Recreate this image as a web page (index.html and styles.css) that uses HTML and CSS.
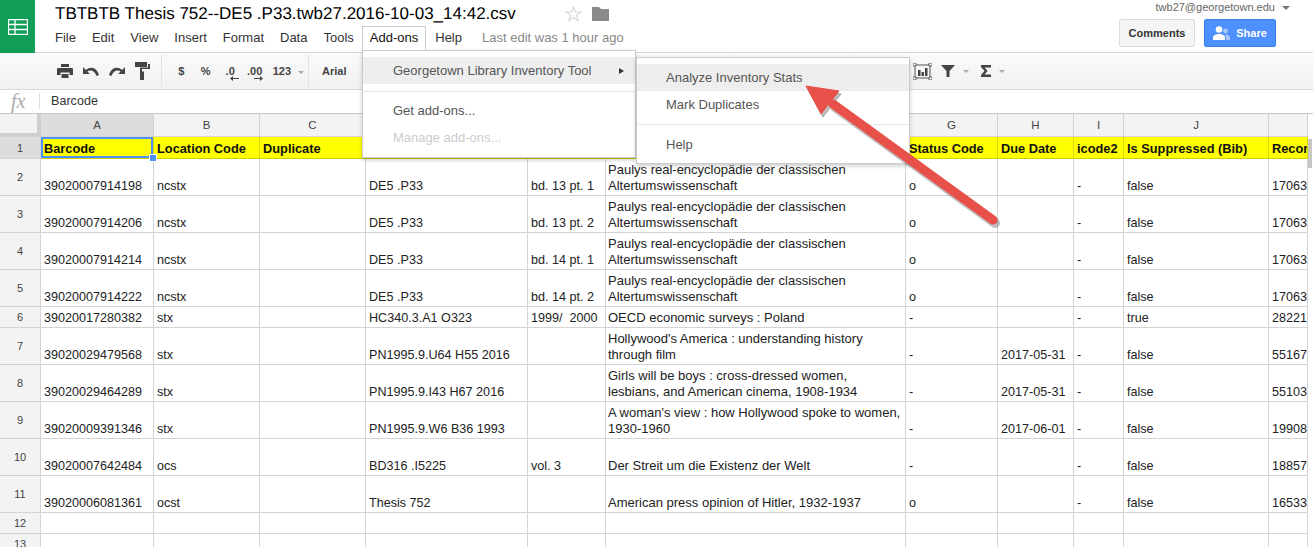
FILE: index.html
```html
<!doctype html>
<html lang="en">
	<head>
		<title>TBTBTB Thesis 752--DE5 .P33.twb27.2016-10-03_14:42.csv</title>
		<meta charset="utf-8">
		<link rel="stylesheet" href="styles.css">
	</head>

	<body>
		<div id="app">
			<div class="header">
				<div class="logo">
					<svg width="20" height="16" viewBox="0 0 20 16"><path d="M.5.5h19v15H.5zM.5 5.500h19M.5 10.500h19M7 .5v15" fill="none" stroke="#fff" stroke-width="1.300"/></svg>
				</div>
				<div class="doc">
					<div class="doc-title">
						<span class="title-text">TBTBTB Thesis 752--DE5 .P33.twb27.2016-10-03_14:42.csv</span>
						<svg class="star" width="17" height="16" viewBox="0 0 17 16"><path d="M8.500 1l2 5h5.300l-4.300 3.300 1.700 5.400-4.700-3.200-4.700 3.200 1.700-5.400L1.200 6h5.300z" fill="none" stroke="#d8d8d8" stroke-width="1.200"/></svg>
						<svg class="folder" width="17" height="14" viewBox="0 0 17 14"><path d="M0 0h7l2 2h8v12H0z" fill="#8a8a8a"/></svg>
					</div>
					<div class="menubar">
						<span class="menu-item">File</span>
						<span class="menu-item">Edit</span>
						<span class="menu-item">View</span>
						<span class="menu-item">Insert</span>
						<span class="menu-item">Format</span>
						<span class="menu-item">Data</span>
						<span class="menu-item">Tools</span>
						<span class="menu-item open">Add-ons</span>
						<span class="menu-item help">Help</span>
						<span class="last-edit">Last edit was 1 hour ago</span>
					</div>
				</div>
				<div class="account">
					<div class="email">twb27@georgetown.edu <i class="caret dark"></i></div>
					<div class="buttons">
						<span class="btn">Comments</span>
						<span class="btn share">
							<svg width="17" height="14" viewBox="0 0 17 14"><circle cx="6" cy="3.500" r="3.300" fill="#fff"/><path d="M0 14v-2.500c0-2 3-3.500 6-3.500s6 1.500 6 3.500V14z" fill="#fff"/><circle cx="12.500" cy="5" r="2.400" fill="#a9c8fb"/><path d="M13 14v-3c0-1-.5-1.800-1.300-2.500 2.500-.3 5.300.8 5.300 2.800V14z" fill="#a9c8fb"/></svg>
							Share
						</span>
					</div>
				</div>
			</div>

			<div class="toolbar">
				<div class="tool-group first">
					<svg width="16" height="14" viewBox="0 0 16 14"><path d="M4 0h8v3H4zM1 4h14a1 1 0 0 1 1 1v6h-3.500V8.500h-9V11H0V5a1 1 0 0 1 1-1zM4.500 10h7v4h-7z" fill="#444"/></svg>
					<svg width="16" height="9" viewBox="0 0 16 9"><path d="M0 0v7h7L4.300 4.400C7.500 2.300 11.500 3.500 13.600 9L16 8C13.500.5 7.800-1.200 2.900 3z" fill="#444"/></svg>
					<svg width="16" height="9" viewBox="0 0 16 9"><path d="M16 0v7H9l2.700-2.600C8.500 2.300 4.500 3.500 2.400 9L0 8C2.500.5 8.200-1.200 13.100 3z" fill="#444"/></svg>
					<svg width="15" height="18" viewBox="0 0 15 18"><path d="M0 0h12v5H0zM13 2h2v5H7v3H5V5.500h8zM5 9.500h4V18H5z" fill="#444"/></svg>
				</div>
				<div class="tool-group numbers">
					<span class="tool-text">$</span>
					<span class="tool-text">%</span>
					<span class="tool-text small">.0<svg width="9" height="5" viewBox="0 0 9 5"><path d="M9 2H3V0L0 2.500 3 5V3h6z" fill="#444"/></svg></span>
					<span class="tool-text small">.00<svg width="9" height="5" viewBox="0 0 9 5"><path d="M0 2h6V0l3 2.500L6 5V3H0z" fill="#444"/></svg></span>
					<span class="tool-text num">123 <i class="caret"></i></span>
				</div>
				<div class="tool-group font">Arial</div>
				<div class="tool-group hidden-a"></div>
				<div class="tool-group hidden-b"></div>
				<div class="tool-group last">
					<svg width="19" height="17" viewBox="0 0 19 17"><path d="M2 2h15v13H2z" fill="none" stroke="#555"/><path d="M5 7h2.500v6H5zM8.500 9H11v4H8.500zM12 5h2.500v8H12z" fill="#444"/><path d="M0 0h3v3H0zM16 0h3v3h-3zM0 14h3v3H0zM16 14h3v3h-3z" fill="#fff" stroke="#444" stroke-width=".8"/></svg>
					<svg class="filter" width="14" height="12" viewBox="0 0 14 12"><path d="M0 0h14L8.500 6v6h-3V6z" fill="#444"/></svg>
					<i class="caret"></i>
					<svg class="sigma" width="10" height="12" viewBox="0 0 10 12"><path d="M0 0h10v2.500H3.700L6.500 6 3.700 9.500H10V12H0V10l3.500-4L0 2z" fill="#444"/></svg>
					<i class="caret"></i>
				</div>
			</div>

			<div class="formula">
				<span class="fx">fx</span>
				<span class="formula-text">Barcode</span>
			</div>

			<div class="sheet">
				<table class="grid">
					<colgroup>
						<col class="w-head"><col class="w-a"><col class="w-b"><col class="w-c"><col class="w-d"><col class="w-e"><col class="w-f"><col class="w-g"><col class="w-h"><col class="w-i"><col class="w-j"><col class="w-k">
					</colgroup>
					<tr class="col-heads">
						<th class="corner"></th><th class="active">A</th><th>B</th><th>C</th><th>D</th><th>E</th><th>F</th><th>G</th><th>H</th><th>I</th><th>J</th><th></th>
					</tr>
					<tr class="short titles">
						<th class="active">1</th><td class="selected">Barcode<span class="handle"></span></td><td>Location Code</td><td>Duplicate</td><td></td><td></td><td></td><td>Status Code</td><td>Due Date</td><td>icode2</td><td>Is Suppressed (Bib)</td><td>Recor</td>
					</tr>
					<tr>
						<th>2</th><td>39020007914198</td><td>ncstx</td><td></td><td>DE5 .P33</td><td>bd. 13 pt. 1</td><td class="wrap">Paulys real-encyclopädie der classischen Altertumswissenschaft</td><td>o</td><td></td><td>-</td><td>false</td><td>17063</td>
					</tr>
					<tr>
						<th>3</th><td>39020007914206</td><td>ncstx</td><td></td><td>DE5 .P33</td><td>bd. 13 pt. 2</td><td class="wrap">Paulys real-encyclopädie der classischen Altertumswissenschaft</td><td>o</td><td></td><td>-</td><td>false</td><td>17063</td>
					</tr>
					<tr>
						<th>4</th><td>39020007914214</td><td>ncstx</td><td></td><td>DE5 .P33</td><td>bd. 14 pt. 1</td><td class="wrap">Paulys real-encyclopädie der classischen Altertumswissenschaft</td><td>o</td><td></td><td>-</td><td>false</td><td>17063</td>
					</tr>
					<tr>
						<th>5</th><td>39020007914222</td><td>ncstx</td><td></td><td>DE5 .P33</td><td>bd. 14 pt. 2</td><td class="wrap">Paulys real-encyclopädie der classischen Altertumswissenschaft</td><td>o</td><td></td><td>-</td><td>false</td><td>17063</td>
					</tr>
					<tr class="short">
						<th>6</th><td>39020017280382</td><td>stx</td><td></td><td>HC340.3.A1 O323</td><td class="pre">1999/  2000</td><td>OECD economic surveys : Poland</td><td>-</td><td></td><td>-</td><td>true</td><td>28221</td>
					</tr>
					<tr>
						<th>7</th><td>39020029479568</td><td>stx</td><td></td><td>PN1995.9.U64 H55 2016</td><td></td><td class="wrap">Hollywood's America : understanding history<br>through film</td><td>-</td><td>2017-05-31</td><td>-</td><td>false</td><td>55167</td>
					</tr>
					<tr>
						<th>8</th><td>39020029464289</td><td>stx</td><td></td><td>PN1995.9.I43 H67 2016</td><td></td><td class="wrap">Girls will be boys : cross-dressed women,<br>lesbians, and American cinema, 1908-1934</td><td>-</td><td>2017-05-31</td><td>-</td><td>false</td><td>55103</td>
					</tr>
					<tr>
						<th>9</th><td>39020009391346</td><td>stx</td><td></td><td>PN1995.9.W6 B36 1993</td><td></td><td class="wrap">A woman's view : how Hollywood spoke to women,<br>1930-1960</td><td>-</td><td>2017-06-01</td><td>-</td><td>false</td><td>19908</td>
					</tr>
					<tr>
						<th>10</th><td>39020007642484</td><td>ocs</td><td></td><td>BD316 .I5225</td><td>vol. 3</td><td>Der Streit um die Existenz der Welt</td><td>-</td><td></td><td>-</td><td>false</td><td>18857</td>
					</tr>
					<tr>
						<th>11</th><td>39020006081361</td><td>ocst</td><td></td><td>Thesis 752</td><td></td><td>American press opinion of Hitler, 1932-1937</td><td>o</td><td></td><td>-</td><td>false</td><td>16533</td>
					</tr>
					<tr class="short">
						<th>12</th><td></td><td></td><td></td><td></td><td></td><td></td><td></td><td></td><td></td><td></td><td></td>
					</tr>
					<tr class="short">
						<th>13</th><td></td><td></td><td></td><td></td><td></td><td></td><td></td><td></td><td></td><td></td><td></td>
					</tr>
				</table>
				<div class="scrollbar"><div class="thumb"></div></div>
			</div>

			<!-- add-ons menu -->
			<div class="menu addons">
				<div class="row hover">Georgetown Library Inventory Tool<span class="more"></span></div>
				<div class="sep"></div>
				<div class="row">Get add-ons...</div>
				<div class="row disabled">Manage add-ons...</div>
			</div>
			<div class="menu submenu">
				<div class="row hover">Analyze Inventory Stats</div>
				<div class="row">Mark Duplicates</div>
				<div class="sep"></div>
				<div class="row">Help</div>
			</div>

			<svg class="arrow" width="1313" height="547" viewBox="0 0 1313 547">
				<g class="arrow-shadow" transform="translate(2 3)">
					<path d="M833 104L993 220" stroke-width="10" stroke-linecap="round"/>
					<path d="M806 86L839 91 821 114z"/>
				</g>
				<g class="arrow-body">
					<path d="M833 104L993 220" stroke-width="9" stroke-linecap="round"/>
					<path d="M806 86L839 91 821 114z"/>
				</g>
			</svg>
		</div>
	</body>
</html>
```
FILE: styles.css
```css
html, body {
	width:100%;
	height:100%;
	margin:0;
	padding:0;
	overflow:hidden;
	background:#fff;
	font-family:"Liberation Sans", Arial, sans-serif;
}

#app {
	position:relative;
	width:1313px;
	height:547px;
	overflow:hidden;
}

/* header */
.header {
	display:flex;
	height:53px;
	box-sizing:border-box;
	border-bottom:1px solid #d9d9d9;
}

.logo {
	display:flex;
	align-items:center;
	justify-content:center;
	width:35px;
	height:53px;
	background:#0f9d58;
}

.doc {
	flex:1;
	padding-left:12px;
}

.doc-title {
	display:flex;
	align-items:center;
	box-sizing:border-box;
	height:26px;
	padding:2px 0 0 8px;
}

.title-text {
	font-size:17px;
	text-rendering:geometricPrecision;
	color:#000;
	white-space:nowrap;
}

.star {
	margin-left:49px;
}

.folder {
	margin-left:10px;
}

.menubar {
	display:flex;
	align-items:flex-start;
	height:24px;
	font-size:13px;
	color:#333;
}

.menu-item {
	padding:0 8px;
	line-height:21px;
	border:1px solid transparent;
	border-bottom:0;
	margin:0 -1px;
}

.menu-item.open {
	position:relative;
	z-index:3;
	height:24px;
	box-sizing:border-box;
	padding:0 7px;
	margin-left:0;
	background:#fff;
	border-color:#ccc;
	color:#111;
}

.menu-item.help {
	margin-left:1px;
}

.last-edit {
	margin-left:12px;
	line-height:23px;
	color:#888;
}

.account {
	padding-right:23px;
	display:flex;
	flex-direction:column;
	align-items:flex-end;
}

.email {
	height:19px;
	line-height:14px;
	font-size:11px;
	color:#666;
}

.buttons {
	display:flex;
	gap:9px;
	margin-right:14px;
}

.btn {
	display:flex;
	align-items:center;
	justify-content:center;
	gap:6px;
	width:76px;
	height:28px;
	box-sizing:border-box;
	border:1px solid #dcdcdc;
	border-radius:2px;
	background:#f5f5f5;
	font-size:11px;
	font-weight:bold;
	color:#333;
}

.btn.share {
	width:72px;
	background:#4d90fe;
	border-color:#3d82f0;
	color:#fff;
}

.caret {
	display:inline-block;
	width:0;
	height:0;
	margin-left:4px;
	vertical-align:middle;
	border-left:3px solid transparent;
	border-right:3px solid transparent;
	border-top:3px solid #aaa;
}

.caret.dark {
	border-left-width:4px;
	border-right-width:4px;
	border-top:4px solid #777;
}

/* toolbar */
.toolbar {
	display:flex;
	height:37px;
	box-sizing:border-box;
	padding:2px 0;
	background:linear-gradient(#fafafa, #f1f1f1);
	border-bottom:1px solid #d9d9d9;
}

.tool-group {
	display:flex;
	align-items:center;
	box-sizing:border-box;
	height:100%;
	border-right:1px solid #e2e2e2;
}

.tool-group.first {
	width:162px;
	padding-left:57px;
	gap:10px;
}

.tool-group.numbers {
	width:147px;
	padding-left:7px;
	font-size:11px;
	font-weight:bold;
	color:#444;
}

.tool-text {
	position:relative;
	width:25px;
	text-align:center;
}

.tool-text.small svg {
	position:absolute;
	left:12px;
	top:11px;
}

.tool-text.num {
	width:40px;
	margin-left:2px;
	white-space:nowrap;
}

.tool-group.font {
	width:120px;
	padding-left:13px;
	font-size:11px;
	font-weight:bold;
	color:#444;
}

.tool-group.hidden-a {
	width:305px;
}

.tool-group.hidden-b {
	width:120px;
}

.tool-group.last {
	border:0;
	padding-left:59px;
}

.filter {
	margin-left:9px;
}

.sigma {
	margin-left:12px;
}

.tool-group.last .caret {
	margin-left:8px;
}

/* formula bar */
.formula {
	display:flex;
	align-items:center;
	height:24px;
	box-sizing:border-box;
	padding-bottom:2px;
	border-bottom:1px solid #c8c8c8;
}

.fx {
	width:40px;
	box-sizing:border-box;
	padding-left:11px;
	border-right:1px solid #ddd;
	font-family:"Liberation Serif", serif;
	font-style:italic;
	font-size:20px;
	line-height:16px;
	color:#aaa;
}

.formula-text {
	margin-left:11px;
	font-size:12.600px;
	color:#333;
}

/* grid */
.sheet {
	display:flex;
}

.grid {
	table-layout:fixed;
	width:1308px;
	border-collapse:separate;
	border-spacing:0;
	font-size:12.600px;
	color:#222;
}

.w-head { width:41px; }
.w-a { width:113px; }
.w-b { width:106px; }
.w-c { width:106px; }
.w-d { width:162px; }
.w-e { width:78px; }
.w-f { width:300px; }
.w-g { width:92px; }
.w-h { width:76px; }
.w-i { width:50px; }
.w-j { width:145px; }
.w-k { width:39px; }

.grid td, .grid th {
	box-sizing:border-box;
	height:37px;
	padding:0;
	border-right:1px solid #d4d4d4;
	border-bottom:1px solid #d4d4d4;
	overflow:hidden;
	white-space:nowrap;
}

.grid td {
	position:relative;
	padding:0 2px 1px 3px;
	vertical-align:bottom;
	line-height:16px;
}

/* title column renders a little wider than the rest */
.grid td:nth-child(7) {
	padding-left:2px;
	font-size:13px;
}

.grid td:last-child {
	padding-right:0;
}

.grid td.wrap {
	white-space:normal;
}

.grid td.pre {
	white-space:pre;
}

.grid th {
	background:#f3f3f3;
	font-weight:normal;
	font-size:11px;
	color:#444;
	text-align:center;
	vertical-align:middle;
}

.grid .col-heads th {
	height:23px;
	font-size:11.500px;
}

.grid .col-heads th.corner {
	background:#f3f3f3;
	border-right:4px solid #cfcfcf;
	border-bottom:4px solid #cfcfcf;
}

.grid th.active {
	background:#ddd;
}

.grid .short td, .grid .short th {
	height:21px;
}

.grid .titles td, .grid .titles th {
	height:22px;
}

.grid .titles td {
	background:#ff0;
	font-weight:bold;
	color:#111;
	font-size:12.800px;
	border-right-color:#d9d900;
	border-bottom-color:#cfcf00;
}

.grid .titles td.selected {
	overflow:visible;
	box-shadow:inset 0 0 0 2px #4d90fe;
}

.handle {
	position:absolute;
	right:-4px;
	bottom:-4px;
	z-index:1;
	width:6px;
	height:6px;
	background:#4d90fe;
	border:1px solid #fff;
}

.scrollbar {
	flex:1;
	background:#fff;
	padding-top:25px;
}

.thumb {
	width:4px;
	height:29px;
	background:#c6c6c6;
}

/* menus, these sit over the sheet */
.menu {
	position:absolute;
	box-sizing:border-box;
	width:274px;
	background:#fff;
	border:1px solid #ccc;
	box-shadow:0 2px 4px rgba(0,0,0,.2);
	font-size:13px;
	color:#555;
	z-index:2;
}

.menu.addons {
	left:362px;
	top:50px;
	height:108px;
	padding-top:6px;
}

.menu.submenu {
	left:636px;
	top:57px;
	height:107px;
	padding-top:6px;
}

.row {
	position:relative;
	height:27px;
	line-height:28px;
	padding-left:30px;
}

.submenu .row {
	padding-left:29px;
}

.row.hover {
	background:#eee;
}

.row.disabled {
	color:#ccc;
}

.more {
	position:absolute;
	right:11px;
	top:11px;
	border-left:5px solid #333;
	border-top:3px solid transparent;
	border-bottom:3px solid transparent;
}

.sep {
	height:1px;
	margin:7px 0 5px;
	background:#e6e6e6;
}

.submenu .sep {
	margin:6px 0 6px;
}

.arrow {
	position:absolute;
	left:0;
	top:0;
	z-index:4;
}

.arrow-shadow {
	fill:rgba(0,0,0,.25);
	stroke:rgba(0,0,0,.25);
}

.arrow-body {
	fill:#e8504a;
	stroke:#e8504a;
}
```
